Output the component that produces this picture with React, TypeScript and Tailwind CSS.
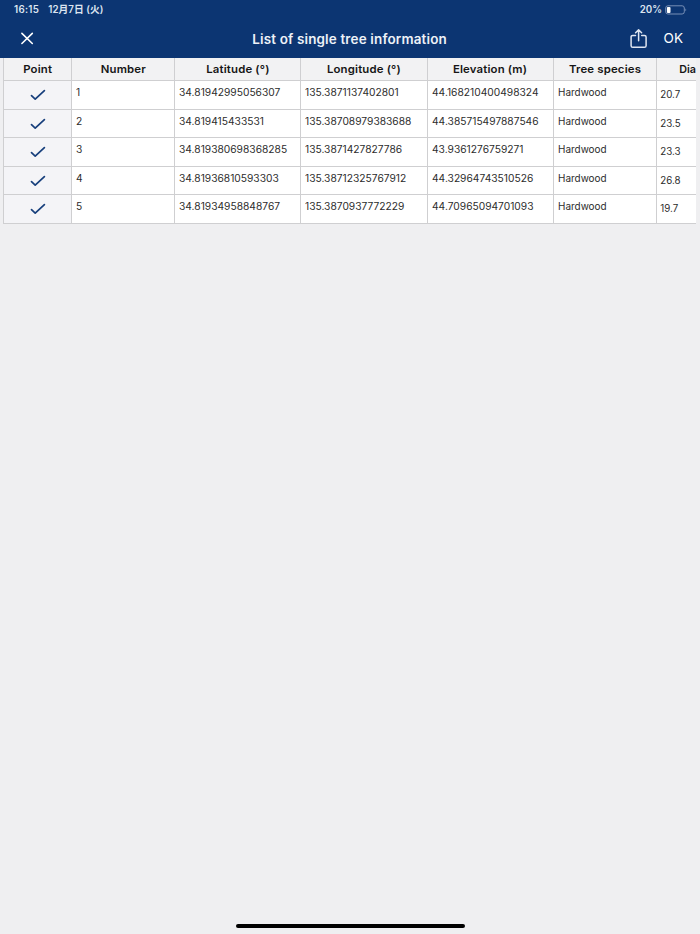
const columns = [
  { title: "Point", width: "w-[68px]" },
  { title: "Number", width: "w-[103px]" },
  { title: "Latitude (°)", width: "w-[126.25px]" },
  { title: "Longitude (°)", width: "w-[126.25px]" },
  { title: "Elevation (m)", width: "w-[126.25px]" },
  { title: "Tree species", width: "w-[103.5px]" },
];

const trees = [
  { no: 1, lat: "34.81942995056307", lng: "135.3871137402801", elevation: "44.168210400498324", species: "Hardwood", diameter: "20.7" },
  { no: 2, lat: "34.819415433531", lng: "135.38708979383688", elevation: "44.385715497887546", species: "Hardwood", diameter: "23.5" },
  { no: 3, lat: "34.819380698368285", lng: "135.3871427827786", elevation: "43.9361276759271", species: "Hardwood", diameter: "23.3" },
  { no: 4, lat: "34.81936810593303", lng: "135.38712325767912", elevation: "44.32964743510526", species: "Hardwood", diameter: "26.8" },
  { no: 5, lat: "34.81934958848767", lng: "135.3870937772229", elevation: "44.70965094701093", species: "Hardwood", diameter: "19.7" },
];

function CheckIcon() {
  return (
    <svg className="mt-px" width="16" height="12" viewBox="0 0 16 12" fill="none" stroke="#173f7c" strokeWidth="1.7" strokeLinecap="round" strokeLinejoin="round">
      <path d="M1.5 6.7 5.2 10.2 14.4 1.7" />
    </svg>
  );
}

function StatusBar() {
  return (
    <div className="flex h-[19px] items-center justify-between pl-3.5 pr-[13px] text-[9.75px] font-semibold leading-none text-[#dce4f0]">
      <div className="flex gap-[9px] pt-px">
        <span className="tracking-[0.3px]">16:15</span>
        <span className="tracking-[0.05px]">12月7日 (火)</span>
      </div>
      <div className="flex items-center gap-[3px]">
        <span className="pt-px">20%</span>
        <svg width="22" height="10" viewBox="0 0 22 10" fill="none">
          <rect x="0.7" y="0.8" width="18.6" height="8.2" rx="2.2" stroke="#8399bd" strokeWidth="0.9" />
          <rect x="1.9" y="1.9" width="3.6" height="6" rx="1" fill="#fff" />
          <path d="M20.5 3.5c.9.4.9 2.4 0 2.8z" fill="#8399bd" />
        </svg>
      </div>
    </div>
  );
}

function NavBar() {
  return (
    <div className="grid h-[39px] grid-cols-[1fr_auto_1fr] items-center pl-5 pr-[17px] text-white">
      <button aria-label="Close" className="w-fit">
        <svg width="14" height="14" viewBox="0 0 14 14" fill="none" stroke="currentColor" strokeWidth="1.6" strokeLinecap="round">
          <path d="M1.9 1.4 12.3 11.5M12.3 1.4 1.9 11.5" />
        </svg>
      </button>
      <h1 className="translate-x-[-1.5px] scale-x-[1.035] pt-px text-[13px] font-semibold leading-none tracking-[0.15px] text-[#eef2f8]">List of single tree information</h1>
      <div className="flex items-center justify-end gap-[15.5px]">
        <svg width="18" height="20" viewBox="0 0 18 20" fill="none" stroke="#dfe6f1" strokeWidth="1.5" strokeLinecap="round" strokeLinejoin="round">
          <path d="M5.5 6.5H2.8C1.6 6.5 1.1 7 1.1 8.1v8.6c0 1.1.5 1.6 1.7 1.6h11.6c1.2 0 1.7-.5 1.7-1.6V8.1c0-1.1-.5-1.6-1.7-1.6h-2.7M8.6 11.8V1.2M5.6 3.8 8.6.9l3 2.9" />
        </svg>
        <span className="pt-px text-[13.5px] leading-none">OK</span>
      </div>
    </div>
  );
}

export default function App() {
  return (
    <div className="flex h-[934px] w-[700px] flex-col overflow-hidden bg-[#efeff1] font-['Inter','Noto_Sans_CJK_JP',sans-serif]">
      <header className="h-[58px] shrink-0 bg-[#0c3572]">
        <StatusBar />
        <NavBar />
      </header>

      <main className="ml-[3px] flex w-[693px] flex-col overflow-hidden border-l border-[#cfcfd1]">
        <div className="flex h-[23px] bg-[#f2f2f3] text-[10.75px] font-semibold leading-[23px] tracking-[0.15px] text-[#161616]">
          {columns.map(c => (
            <div key={c.title} className={`${c.width} shrink-0 border-r border-b border-[#cfcfd1] text-center`}>
              <span className="inline-block scale-x-[1.06]">{c.title}</span>
            </div>
          ))}
          <div className="grow border-b border-[#cfcfd1] pl-[22px]">
            <span className="inline-block origin-left tracking-normal">Dia</span>
          </div>
        </div>

        {trees.map(t => (
          <div key={t.no} className="flex h-[28.5px] bg-white text-[9.75px] leading-[24.5px] text-[#2c2c2c] *:border-b *:border-[#cfcfd1]">
            <div className="flex w-[68px] shrink-0 items-center justify-center border-r bg-[#f4f4f7]">
              <CheckIcon />
            </div>
            <div className="w-[103px] shrink-0 border-r pl-1">
              <span className="inline-block origin-left scale-x-[1.05]">{t.no}</span>
            </div>
            <div className="w-[126.25px] shrink-0 border-r pl-1">
              <span className="inline-block origin-left scale-x-[1.05]">{t.lat}</span>
            </div>
            <div className="w-[126.25px] shrink-0 border-r pl-1">
              <span className="inline-block origin-left scale-x-[1.05]">{t.lng}</span>
            </div>
            <div className="w-[126.25px] shrink-0 border-r pl-1">
              <span className="inline-block origin-left scale-x-[1.05]">{t.elevation}</span>
            </div>
            <div className="w-[103.5px] shrink-0 border-r pl-1">
              <span className="inline-block origin-left scale-x-[1.02]">{t.species}</span>
            </div>
            <div className="grow pl-[3px] pt-[2px]">
              <span className="inline-block origin-left">{t.diameter}</span>
            </div>
          </div>
        ))}
      </main>

      <div className="mr-auto ml-[235.5px] mt-auto mb-[6.5px] h-1 w-[229px] shrink-0 rounded-full bg-black" />
    </div>
  );
}
